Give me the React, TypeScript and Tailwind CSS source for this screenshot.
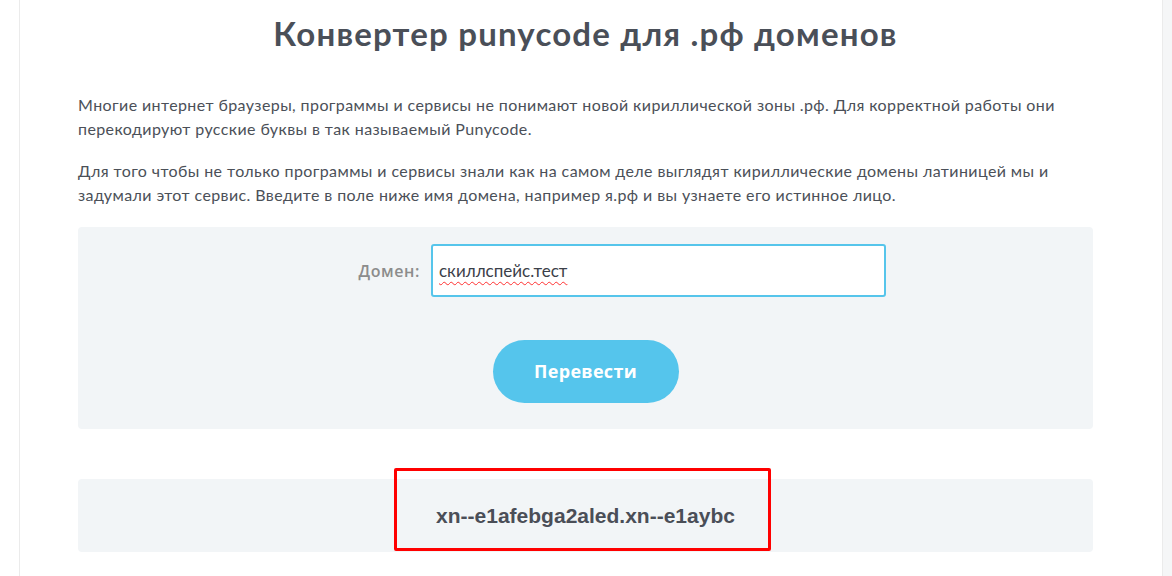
import React from 'react';

export default function App() {
  return (
    <div className="flex h-[576px] w-full overflow-hidden bg-white font-['Lato',sans-serif] text-[#4b5058]">
      <div className="w-[19px] shrink-0 bg-white" />
      <main className="w-[1144px] shrink-0 border-x border-[#ebebeb] bg-white pl-[58px] pr-[69px]">
        <h1 className="mt-[13px] text-center text-[33px] font-bold leading-[40px] tracking-[1.2px] text-[#4a4f58]">
          Конвертер punycode для .рф доменов
        </h1>

        <p className="mt-[40px] text-[16px] leading-[24px] tracking-[0.4px]">
          Многие интернет браузеры, программы и сервисы не понимают новой кириллической зоны .рф. Для корректной работы они
          перекодируют русские буквы в так называемый Punycode.
        </p>
        <p className="mt-[18px] text-[16px] leading-[24px] tracking-[0.4px]">
          Для того чтобы не только программы и сервисы знали как на самом деле выглядят кириллические домены латиницей мы и
          задумали этот сервис. Введите в поле ниже имя домена, например я.рф и вы узнаете его истинное лицо.
        </p>

        <section className="mt-[20px] rounded-[4px] bg-[#f2f5f7] pt-[17px] pb-[26px]">
          <div className="flex items-center">
            <label className="w-[342px] text-right font-['Open_Sans',sans-serif] text-[16px] font-semibold tracking-[0.6px] text-[#8c8c8c]">
              Домен:
            </label>
            <div className="ml-[11px] flex h-[53px] w-[455px] items-center rounded-[3px] border-2 border-[#56c5eb] bg-white px-[6px]">
              <span className="text-[17px] text-[#3b4049] underline decoration-[#ff3030] decoration-wavy decoration-1 underline-offset-[4px]">
                скиллспейс.тест
              </span>
            </div>
          </div>
          <div className="mt-[43px] flex justify-center">
            <button className="h-[63px] w-[186px] rounded-full bg-[#55c5ec] font-['Open_Sans',sans-serif] text-[18px] font-bold tracking-[0.3px] text-white">
              Перевести
            </button>
          </div>
        </section>

        <section className="relative mt-[50px] flex h-[73px] items-center justify-center rounded-[4px] bg-[#f2f5f7]">
          <span className="font-['Liberation_Sans',sans-serif] text-[21px] font-bold text-[#4a4e57]">
            xn--e1afebga2aled.xn--e1aybc
          </span>
          <div className="absolute left-[316px] top-[-11px] h-[83px] w-[377px] rounded-[2px] border-[3px] border-[#ff0000]" />
        </section>
      </main>
      <div className="flex-1 bg-[#f5f6f7]" />
    </div>
  );
}
